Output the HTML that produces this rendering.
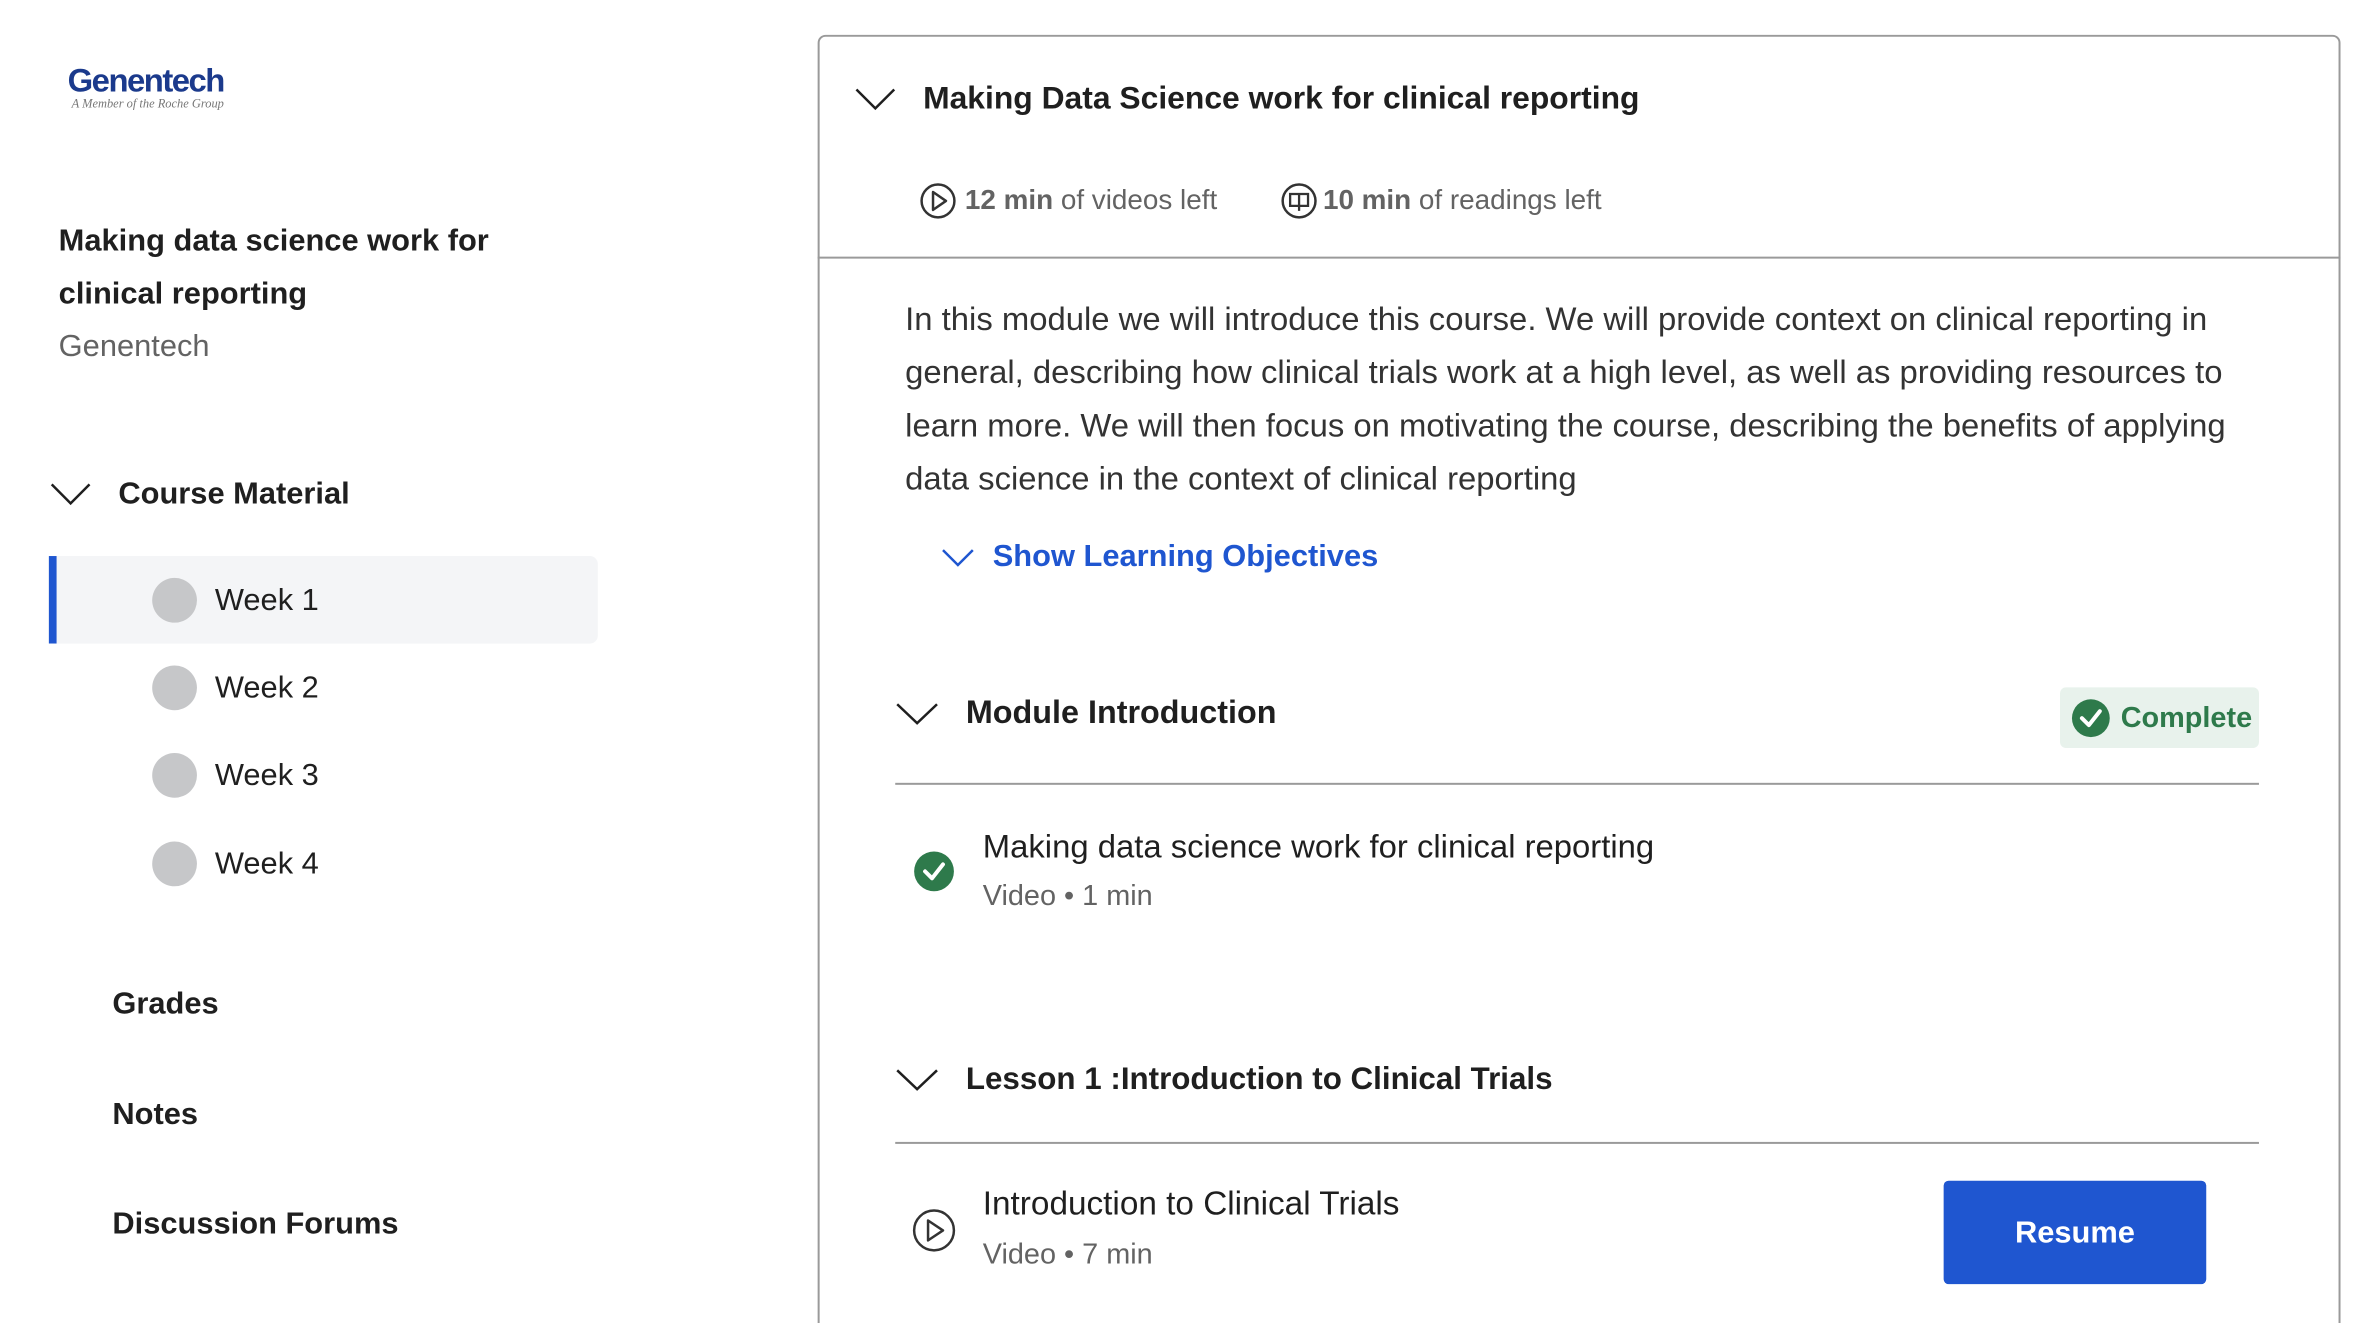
<!DOCTYPE html>
<html><head><meta charset="utf-8"><style>
*{margin:0;padding:0;box-sizing:border-box}
html,body{width:2374px;height:1324px;overflow:hidden}
body{background:#fff;font-family:"Liberation Sans",sans-serif;color:#1f1f1f;position:relative}
#w{position:absolute;left:0;top:0;width:2386px;height:1330px;overflow:hidden;transform:scale(0.9947);transform-origin:0 0}
.a{position:absolute;white-space:nowrap}
.b{font-weight:bold}
.chev{position:absolute}
</style></head><body><div id="w">
<div class="a" style="left:68px;top:62px;font:bold 33px 'Liberation Sans',sans-serif;color:#1b3a8c;letter-spacing:-1.5px">Genentech</div>
<div class="a" style="left:72px;top:97px;font:italic 12.5px 'Liberation Serif',serif;color:#777">A Member of the Roche Group</div>

<div class="a b" style="left:59px;top:215px;font-size:31px;line-height:53px">Making data science work for<br>clinical reporting</div>
<div class="a" style="left:59px;top:330px;font-size:31px;color:#636363">Genentech</div>

<svg class="chev" style="left:50px;top:484px" width="42" height="26"><path d="M2 3 L21 22 L40 3" fill="none" stroke="#1f1f1f" stroke-width="2.5"/></svg>
<div class="a b" style="left:119px;top:478px;font-size:31px">Course Material</div>

<div class="a" style="left:49px;top:559px;width:552px;height:88px;background:#f4f5f7;border-radius:0 8px 8px 0;border-left:8px solid #1f56d0"></div>
<div class="a" style="left:153px;top:581px;width:45px;height:45px;border-radius:50%;background:#c6c7c9"></div>
<div class="a" style="left:216px;top:585px;font-size:31px">Week 1</div>
<div class="a" style="left:153px;top:669px;width:45px;height:45px;border-radius:50%;background:#c6c7c9"></div>
<div class="a" style="left:216px;top:673px;font-size:31px">Week 2</div>
<div class="a" style="left:153px;top:757px;width:45px;height:45px;border-radius:50%;background:#c6c7c9"></div>
<div class="a" style="left:216px;top:761px;font-size:31px">Week 3</div>
<div class="a" style="left:153px;top:846px;width:45px;height:45px;border-radius:50%;background:#c6c7c9"></div>
<div class="a" style="left:216px;top:850px;font-size:31px">Week 4</div>

<div class="a b" style="left:113px;top:991px;font-size:31px">Grades</div>
<div class="a b" style="left:113px;top:1102px;font-size:31px">Notes</div>
<div class="a b" style="left:113px;top:1212px;font-size:31px">Discussion Forums</div>

<div class="a" style="left:822px;top:35px;width:1531px;height:1400px;border:2px solid #9a9a9a;border-radius:8px"></div>
<div class="a" style="left:822px;top:258px;width:1531px;height:2px;background:#9a9a9a"></div>

<svg class="chev" style="left:859px;top:87px" width="42" height="26"><path d="M2 3 L21 22 L40 3" fill="none" stroke="#1f1f1f" stroke-width="2.5"/></svg>
<div class="a b" style="left:928px;top:80px;font-size:32px">Making Data Science work for clinical reporting</div>

<svg class="a" style="left:924px;top:183px" width="38" height="38"><circle cx="19" cy="19" r="16.5" fill="none" stroke="#333" stroke-width="2.5"/><path d="M14 10 L27 19 L14 28 Z" fill="none" stroke="#333" stroke-width="2.5" stroke-linejoin="round"/></svg>
<div class="a" style="left:970px;top:185px;font-size:28px;color:#636363"><b>12 min</b> of videos left</div>
<svg class="a" style="left:1287px;top:183px" width="38" height="38"><circle cx="19" cy="19" r="16.5" fill="none" stroke="#333" stroke-width="2.5"/><path d="M10 12 H28 V24 H10 Z M19 12 V29 M10 24 L19 24" fill="none" stroke="#333" stroke-width="2.3"/></svg>
<div class="a" style="left:1330px;top:185px;font-size:28px;color:#636363"><b>10 min</b> of readings left</div>

<div class="a" style="left:910px;top:294px;font-size:33px;line-height:53.3px;color:#333">In this module we will introduce this course. We will provide context on clinical reporting in<br>general, describing how clinical trials work at a high level, as well as providing resources to<br>learn more. We will then focus on motivating the course, describing the benefits of applying<br>data science in the context of clinical reporting</div>

<svg class="chev" style="left:946px;top:551px" width="34" height="20"><path d="M2 2 L17 17 L32 2" fill="none" stroke="#1f56d0" stroke-width="2.5"/></svg>
<div class="a b" style="left:998px;top:541px;font-size:31px;color:#1f56d0">Show Learning Objectives</div>

<svg class="chev" style="left:900px;top:705px" width="44" height="26"><path d="M2 3 L22 22 L42 3" fill="none" stroke="#1f1f1f" stroke-width="2.5"/></svg>
<div class="a b" style="left:971px;top:698px;font-size:32.5px">Module Introduction</div>
<div class="a" style="left:2071px;top:691px;width:200px;height:61px;background:#e8f2ec;border-radius:6px"></div>
<svg class="a" style="left:2082px;top:702px" width="40" height="40"><circle cx="20" cy="20" r="19" fill="#2e7a4b"/><path d="M11 20 L18 27 L29 13" fill="none" stroke="#fff" stroke-width="4" stroke-linecap="round" stroke-linejoin="round"/></svg>
<div class="a b" style="left:2132px;top:706px;font-size:29px;color:#2e7a4b">Complete</div>
<div class="a" style="left:900px;top:787px;width:1371px;height:2px;background:#9a9a9a"></div>

<svg class="a" style="left:918px;top:855px" width="42" height="42"><circle cx="21" cy="21" r="20" fill="#2e7a4b"/><path d="M12 21 L19 28 L30 14" fill="none" stroke="#fff" stroke-width="4" stroke-linecap="round" stroke-linejoin="round"/></svg>
<div class="a" style="left:988px;top:832px;font-size:33px;color:#1f1f1f">Making data science work for clinical reporting</div>
<div class="a" style="left:988px;top:885px;font-size:29px;color:#636363">Video • 1 min</div>

<svg class="chev" style="left:900px;top:1073px" width="44" height="26"><path d="M2 3 L22 22 L42 3" fill="none" stroke="#1f1f1f" stroke-width="2.5"/></svg>
<div class="a b" style="left:971px;top:1066px;font-size:31.5px">Lesson 1 :Introduction to Clinical Trials</div>
<div class="a" style="left:900px;top:1148px;width:1371px;height:2px;background:#9a9a9a"></div>

<svg class="a" style="left:917px;top:1215px" width="44" height="44"><circle cx="22" cy="22" r="20" fill="none" stroke="#333" stroke-width="2.5"/><path d="M16 12 L31 22 L16 32 Z" fill="none" stroke="#333" stroke-width="2.5" stroke-linejoin="round"/></svg>
<div class="a" style="left:988px;top:1192px;font-size:33.5px;color:#1f1f1f">Introduction to Clinical Trials</div>
<div class="a" style="left:988px;top:1245px;font-size:29px;color:#636363">Video • 7 min</div>
<div class="a b" style="left:1954px;top:1187px;width:264px;height:104px;background:#1f56d0;border-radius:5px;color:#fff;font-size:31px;text-align:center;line-height:104px">Resume</div>
</div></body></html>
